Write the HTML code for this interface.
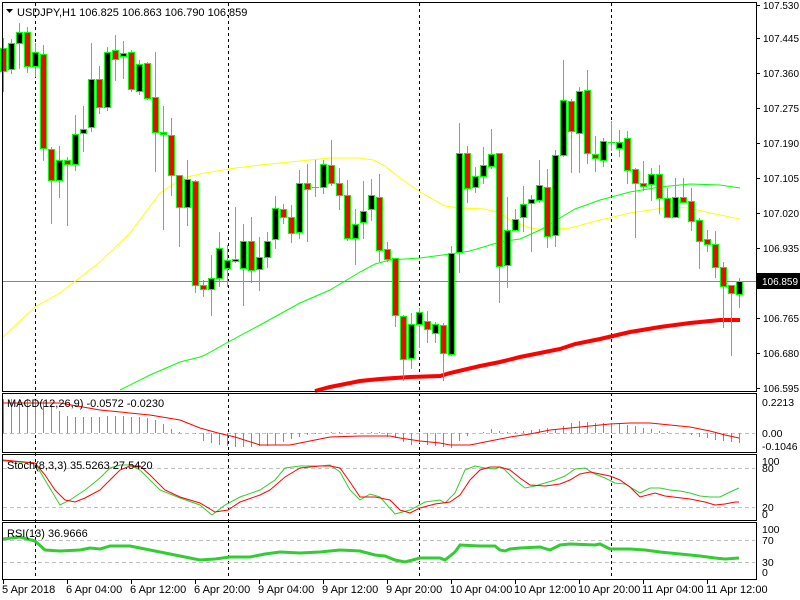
<!DOCTYPE html>
<html><head><meta charset="utf-8"><style>
body{margin:0;background:#fff;width:800px;height:600px;overflow:hidden}
svg{display:block;font-family:"Liberation Sans",sans-serif;font-size:11px}
</style></head><body>
<svg id="s" width="800" height="600" xmlns="http://www.w3.org/2000/svg">
<rect width="800" height="600" fill="#fff"/>
<g id="grid"></g>
<line x1="2" y1="281.5" x2="756" y2="281.5" stroke="#778899" stroke-width="1"/>
<polyline fill="none" stroke="#ffff00" stroke-width="1" points="3,337 35,307 60,293 100,262 130,233 160,193 183,178 200,174 228,169 260,165 300,161 330,158 360,158 373,160 385,166 400,178 420,192 445,206 460,208 485,209 500,213 510,220 530,228 545,230 570,228 600,220 630,213 650,210 670,207 690,208 710,213 740,219"/>
<polyline fill="none" stroke="#00ff00" stroke-width="1" points="120,390 150,375 180,362 200,357 205,355 230,341 260,325 300,303 330,290 360,272 375,264 390,260 420,258 450,254 470,251 500,242 520,239 540,230 560,218 575,209 600,200 630,192 660,187 690,184 720,185 740,188"/>
<polyline fill="none" stroke="#ff0000" stroke-width="4" points="315,391 330,387 360,381 380,379 410,377 440,376 450,373 480,366 500,362 520,357 540,353 560,349 575,344 600,339 630,332 660,327 690,323 720,320 740,320"/>
<g id="candles"></g>
<line x1="3" y1="433.5" x2="755" y2="433.5" stroke="#c0c0c0" stroke-dasharray="4,3"/>
<g id="hist"></g>
<polyline fill="none" stroke="#ff0000" stroke-width="1" points="3,403 60,403 100,410 150,415 180,420 200,428 218,433 235,437 260,445 290,445 310,441 330,437 360,436 390,436 400,438 420,441 440,443 450,445 470,445 490,441 510,437 530,434 550,430 570,428 590,426 610,424 630,423 650,423 670,425 690,427 710,431 725,435 739,438"/>
<line x1="3" y1="468.5" x2="755" y2="468.5" stroke="#c0c0c0" stroke-dasharray="4,3"/>
<line x1="3" y1="507.5" x2="755" y2="507.5" stroke="#c0c0c0" stroke-dasharray="4,3"/>
<polyline fill="none" stroke="#32cd32" stroke-width="1" points="3,461 35,463 45,480 60,505 70,500 85,490 100,478 110,468 120,465 130,465 140,470 160,490 180,498 200,505 212,515 225,505 240,497 260,490 275,480 285,468 300,466 320,466 330,465 340,472 350,490 360,500 370,494 380,497 395,514 410,510 425,502 440,500 445,503 455,493 465,470 475,466 485,468 495,469 500,467 505,470 515,480 525,488 535,486 545,483 555,480 565,476 575,469 585,468 595,474 605,478 615,483 625,484 630,487 640,493 650,488 660,488 670,490 680,491 690,493 700,496 710,497 720,497 730,492 739,488"/>
<polyline fill="none" stroke="#ff0000" stroke-width="1" points="3,460 35,463 45,475 55,490 65,500 75,502 85,498 100,490 110,480 120,470 130,466 140,466 150,475 165,490 180,497 200,503 215,512 228,510 240,502 260,495 270,490 285,477 300,468 320,466 330,466 340,468 350,482 360,497 375,497 390,500 400,510 410,513 420,508 435,504 450,502 460,495 470,480 480,470 490,467 500,467 510,470 520,478 530,485 545,486 560,484 570,480 580,474 590,472 600,474 610,476 620,480 630,487 640,497 655,493 665,496 690,499 705,502 715,505 725,504 735,502 739,502"/>
<line x1="3" y1="540.5" x2="755" y2="540.5" stroke="#c0c0c0" stroke-dasharray="4,3"/>
<line x1="3" y1="562.5" x2="755" y2="562.5" stroke="#c0c0c0" stroke-dasharray="4,3"/>
<polyline fill="none" stroke="#32cd32" stroke-width="3" points="3,539 20,537 35,541 45,550 60,551 80,550 90,548 100,549 110,546 130,546 140,548 160,552 175,555 190,558 200,560 215,559 230,557 250,557 265,554 280,552 300,553 320,552 340,550 360,551 375,555 385,556 395,560 405,562 420,558 440,558 445,560 455,552 460,545 480,546 495,546 500,550 505,551 510,549 520,548 540,547 550,550 560,545 570,544 595,545 600,544 610,549 630,549 645,550 660,552 680,554 700,556 715,558 725,559 739,558"/>
<g fill="none" stroke="#000" stroke-width="1">
<rect x="2.5" y="2.5" width="754" height="389"/>
<rect x="2.5" y="393.5" width="754" height="59"/>
<rect x="2.5" y="454.5" width="754" height="66"/>
<rect x="2.5" y="522.5" width="754" height="57"/>
</g>
<g id="axis" fill="#000" font-size="10.5"></g>
<path d="M6,9 L13,9 L9.5,13 Z" fill="#000"/>
<text x="17" y="16">USDJPY,H1  106.825 106.863 106.790 106.859</text>
<text x="7" y="407">MACD(12,26,9) -0.0572 -0.0230</text>
<text x="7" y="469">Stoch(8,3,3) 35.5263 27.5420</text>
<text x="7" y="537">RSI(13) 36.9666</text>
<rect x="757" y="273" width="43" height="16" fill="#000"/>
<text x="762" y="285" fill="#fff" font-size="10.5" textLength="36" lengthAdjust="spacingAndGlyphs">106.859</text>
<g font-size="10.5">
<text x="762" y="406">0.2213</text>
<text x="762" y="437">0.00</text>
<text x="762" y="450">-0.1046</text>
<text x="762" y="465">100</text>
<text x="762" y="472">80</text>
<text x="762" y="511">20</text>
<text x="762" y="518">0</text>
<text x="762" y="533">100</text>
<text x="762" y="544">70</text>
<text x="762" y="566">30</text>
<text x="762" y="576">0</text>
</g>
</svg>
<script>
var NS="http://www.w3.org/2000/svg";
function el(p,t,a,txt){var e=document.createElementNS(NS,t);for(var k in a)e.setAttribute(k,a[k]);if(txt)e.textContent=txt;p.appendChild(e);return e;}
var C=[["r",48,71,38,92],["b",43,69,39,74],["b",32,43,23,69],["r",32,66,27,73],["b",52,66,43,77],["r",54,148,45,161],["r",149,180,147,224],["b",160,180,146,198],["r",160,164,157,226],["b",134,164,115,171],["b",129,133,106,152],["b",79,127,43,132],["r",79,107,66,114],["b",52,107,47,111],["r",50,59,35,81],["b",53,56,41,79],["r",52,89,50,92],["b",64,91,60,95],["r",63,98,62,100],["r",97,132,52,172],["r",132,134,106,230],["r",135,175,118,196],["r",175,207,175,247],["b",179,207,160,226],["r",181,285,180,293],["r",285,289,280,297],["b",278,289,255,316],["b",248,278,232,287],["b",260,268,245,287],["b",259,261,207,263],["b",241,268,224,306],["r",241,270,217,283],["b",257,269,237,291],["b",241,257,232,268],["b",208,239,196,249],["r",209,217,204,224],["r",217,233,205,243],["b",183,232,170,239],["r",183,189,164,242],["d",187,187,160,197],["b",164,187,160,194],["r",165,183,140,186],["r",183,195,168,210],["r",195,238,180,241],["b",224,238,209,265],["b",211,222,181,239],["b",195,209,179,221],["r",197,250,174,262],["r",249,259,242,262],["r",258,315,258,327],["r",316,359,315,381],["b",324,358,313,369],["b",312,324,308,348],["r",321,329,311,343],["b",324,333,322,343],["r",325,353,323,381],["b",253,354,246,356],["b",153,252,123,273],["r",153,188,146,203],["b",176,187,167,193],["b",165,176,147,184],["b",154,166,129,169],["r",153,266,153,303],["b",230,265,197,288],["b",219,230,209,231],["b",204,217,186,232],["b",199,203,195,252],["b",185,200,160,203],["r",187,236,169,248],["b",155,235,150,247],["b",100,155,60,157],["r",101,131,99,173],["b",91,133,87,173],["r",90,153,70,164],["r",154,158,136,172],["b",141,160,138,167],["d",142,142,121,151],["b",142,148,130,157],["r",138,170,131,184],["r",169,183,168,238],["r",183,186,161,191],["b",174,184,168,201],["r",174,198,165,214],["r",198,217,188,217],["b",197,217,178,217],["r",197,202,178,203],["r",201,221,188,231],["r",220,241,218,269],["r",239,244,230,252],["r",244,267,231,278],["r",267,286,262,328],["r",285,293,285,356],["b",281,294,278,308]];
var g=document.getElementById("candles");
C.forEach(function(c,i){var x=3+8*i;
el(g,"line",{x1:x+0.5,x2:x+0.5,y1:c[3],y2:c[4],stroke:"#00ff00"});
if(c[0]=="d"){el(g,"line",{x1:x-3,x2:x+4,y1:c[1]+0.5,y2:c[1]+0.5,stroke:"#00ff00"});}
else{var h=Math.max(c[2]-c[1],2);el(g,"rect",{x:x-2.5,y:c[1]+0.5,width:6,height:h,fill:c[0]=="r"?"#ff0000":"#000",stroke:"#00ff00"});}
});
var H=[34,34,34,34,33,32,28,22,17,16,16,16,16,17,17,17,16,16,15,13,9,4,1,0,-1,-8,-10,-12,-13,-14,-14,-14,-13,-13,-12,-9,-6,-4,-2,-1,0,1,1,0,-1,0,1,1,-4,-5,-9,-12,-10,-12,-13,-14,-15,-8,-3,0,1,4,2,1,1,2,3,4,5,4,7,10,12,11,10,10,10,10,8,7,5,4,2,1,0,-1,-2,-4,-5,-7,-8,-9,-10];
var hg=document.getElementById("hist");
H.forEach(function(v,i){var x=3+8*i+0.5;if(v==0)return;el(hg,"line",{x1:x,x2:x,y1:433,y2:433-v,stroke:"#32cd32"});});
var gr=document.getElementById("grid");
[35,228,419,611].forEach(function(x){el(gr,"line",{x1:x+0.5,x2:x+0.5,y1:3,y2:580,stroke:"#000","stroke-dasharray":"3,3"});});
var ax=document.getElementById("axis");
var P=[["107.530",5],["107.445",38],["107.360",73],["107.275",108],["107.190",143],["107.105",178],["107.020",213],["106.935",248],["106.765",318],["106.680",353],["106.595",388]];
P.forEach(function(p){el(ax,"line",{x1:757,x2:760,y1:p[1]+0.5,y2:p[1]+0.5,stroke:"#000"});el(ax,"text",{x:763,y:p[1]+4,textLength:36,lengthAdjust:"spacingAndGlyphs"},p[0]);});
var T=["5 Apr 2018","6 Apr 04:00","6 Apr 12:00","6 Apr 20:00","9 Apr 04:00","9 Apr 12:00","9 Apr 20:00","10 Apr 04:00","10 Apr 12:00","10 Apr 20:00","11 Apr 04:00","11 Apr 12:00"];
T.forEach(function(t,i){var x=3+64*i;el(ax,"line",{x1:x+0.5,x2:x+0.5,y1:580,y2:584,stroke:"#000"});el(ax,"text",{x:i==0?2:x-1,y:593,"font-size":"11"},t);});
</script>
</body></html>
